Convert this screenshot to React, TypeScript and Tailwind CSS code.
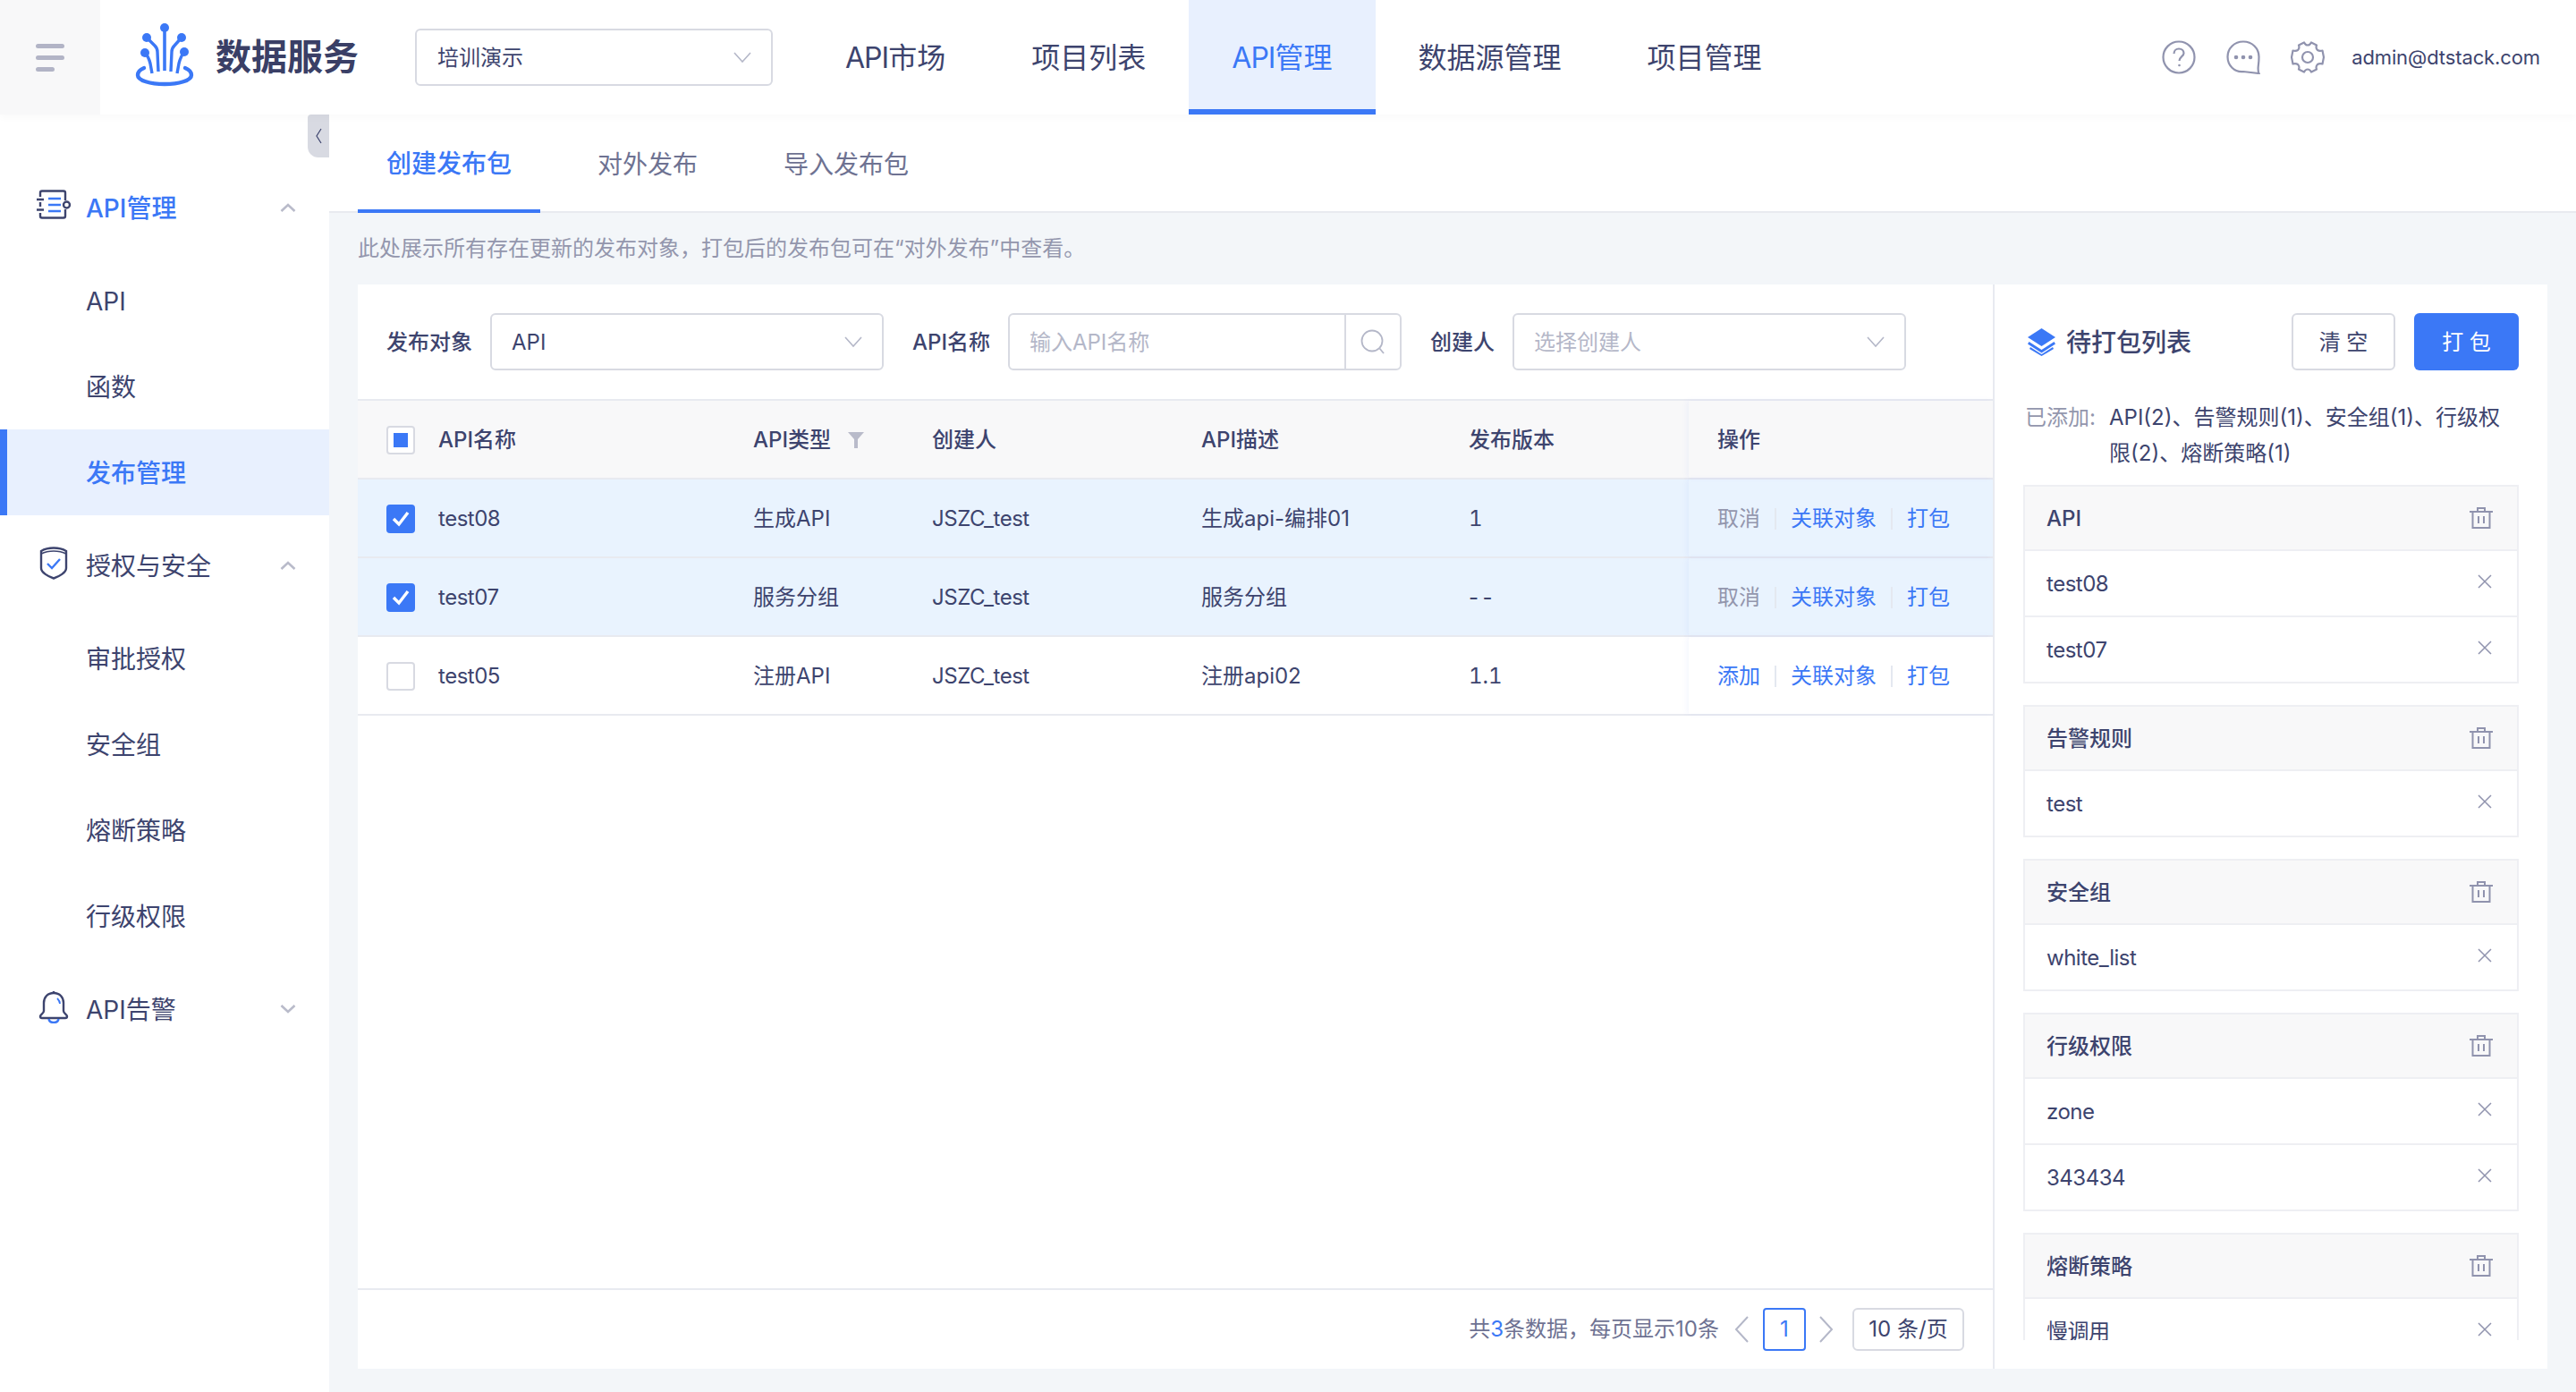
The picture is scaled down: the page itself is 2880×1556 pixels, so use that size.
import React from 'react';

const navItems = ['API市场', '项目列表', 'API管理', '数据源管理', '项目管理'];

const rows = [
  { name: 'test08', type: '生成API', creator: 'JSZC_test', desc: '生成api-编排01', version: '1', selected: true },
  { name: 'test07', type: '服务分组', creator: 'JSZC_test', desc: '服务分组', version: '- -', selected: true },
  { name: 'test05', type: '注册API', creator: 'JSZC_test', desc: '注册api02', version: '1.1', selected: false },
];

const packGroups = [
  { title: 'API', items: ['test08', 'test07'] },
  { title: '告警规则', items: ['test'] },
  { title: '安全组', items: ['white_list'] },
  { title: '行级权限', items: ['zone', '343434'] },
  { title: '熔断策略', items: ['慢调用'] },
];

const gridCols = 'grid grid-cols-[90px_353px_199px_301px_299px_246px_340px]';
const fixedCol = 'flex h-full items-center pl-[32px] shadow-[-2px_0_6px_rgba(63,110,246,0.06)]';

const Logo = () => (
  <svg width="90" height="90" viewBox="0 0 90 90" fill="none" stroke="#3b78f6">
    <circle cx="44" cy="14" r="5" fill="#3b78f6" stroke="none" />
    <circle cx="24" cy="25" r="5" fill="#3b78f6" stroke="none" />
    <circle cx="63" cy="25" r="5" fill="#3b78f6" stroke="none" />
    <circle cx="22" cy="42" r="5" fill="#3b78f6" stroke="none" />
    <circle cx="66" cy="41" r="5" fill="#3b78f6" stroke="none" />
    <path d="M44 14V62" strokeWidth="3.6" />
    <path d="M24 25L33 34C35 36 36 38 36 41L37 63" strokeWidth="3.4" />
    <path d="M63 25L55 34C53 36 52 38 52 41L51 63" strokeWidth="3.4" />
    <path d="M22 42C26 46 27 50 28 54L30 65" strokeWidth="3.4" />
    <path d="M66 41C62 46 61 50 60 54L58 65" strokeWidth="3.4" />
    <path d="M21 59C16 61 14 64 14 67C14 73 28 77 44 77C60 77 74 73 74 67C74 64 72 61 67 59" strokeWidth="4.4" strokeLinecap="round" />
  </svg>
);

const Chevron = ({ className = '' }: { className?: string }) => (
  <svg className={className} width="20" height="12" viewBox="0 0 20 12" fill="none" stroke="#b4b7c8" strokeWidth="1.6">
    <path d="M1 1L10 11L19 1" />
  </svg>
);

const MenuArrow = ({ up }: { up: boolean }) => (
  <svg width="18" height="10" viewBox="0 0 18 10" fill="none" stroke="#b9bbca" strokeWidth="2.6">
    <path d={up ? 'M1.5 9L9 2L16.5 9' : 'M1.5 1L9 8L16.5 1'} />
  </svg>
);

const ApiIcon = () => (
  <svg width="40" height="40" viewBox="10 10 40 40" fill="none" strokeWidth="2.4" className="shrink-0">
    <path d="M15 20V15.5A2 2 0 0 1 17 13.5H41A2 2 0 0 1 43 15.500V24M15 26V31M15 38V41.500A2 2 0 0 0 17 43.500H41A2 2 0 0 0 43 41.500V34" stroke="#3d446e" />
    <path d="M11 23H19M11 34.500H19" stroke="#3d446e" />
    <circle cx="44.500" cy="29" r="3.500" stroke="#3d446e" />
    <path d="M24 22H38M24 29H38M24 36H38" stroke="#3b78f6" />
  </svg>
);

const ShieldIcon = () => (
  <svg width="32" height="37" viewBox="0 0 32 37" fill="none" strokeWidth="2.4" className="shrink-0">
    <path d="M16 1.500C21 1.500 26 2.500 30 5V24C30 29 22 33.500 16 35.500C10 33.500 2 29 2 24V5C6 2.500 11 1.500 16 1.500Z" stroke="#3d446e" />
    <path d="M2 8C6 6 11 5 16 5C21 5 26 6 30 8" stroke="#3d446e" strokeWidth="1.600" />
    <path d="M9 19L14 24L23 14" stroke="#3b78f6" />
  </svg>
);

const BellIcon = () => (
  <svg width="34" height="37" viewBox="0 0 34 37" fill="none" strokeWidth="2.400" className="shrink-0">
    <path d="M17 3C10 3 6 8 6 14V23C6 26 2 27 2 29C2 30.500 3 31 4 31H30C31 31 32 30.500 32 29C32 27 28 26 28 23V14C28 8 24 3 17 3Z" stroke="#3d446e" />
    <path d="M17 1V3" stroke="#3d446e" />
    <path d="M21 9C23 11 24 13 24 15" stroke="#3b78f6" strokeWidth="1.800" />
    <path d="M11.500 32C12 35 14 36 17 36C20 36 22 35 22.500 32" stroke="#3b78f6" />
  </svg>
);

const HeaderIcons = () => (
  <div className="mr-[30px] flex items-center gap-[34px]">
    <svg width="38" height="38" viewBox="0 0 38 38" fill="none" stroke="#9093ae" strokeWidth="2.200">
      <circle cx="19" cy="19" r="17.500" />
      <path d="M13.500 15C13.500 11.500 16 9.500 19 9.500C22 9.500 24.500 11.500 24.500 14.500C24.500 18 19.500 18.500 19.500 23" />
      <circle cx="19.500" cy="28" r="1.300" fill="#9093ae" stroke="none" />
    </svg>
    <svg width="38" height="38" viewBox="0 0 38 38" fill="none" stroke="#9093ae" strokeWidth="2.200">
      <path d="M19 1.500C9 1.500 1.500 9 1.500 18.500C1.500 28 9 36 19 35L36.500 37C35 34 35.500 31 36 27C36.500 24 36.500 21 36.500 18.500C36.500 9 29 1.500 19 1.500Z" />
      <circle cx="11" cy="19" r="2.300" fill="#9093ae" stroke="none" />
      <circle cx="19" cy="19" r="2.300" fill="#9093ae" stroke="none" />
      <circle cx="27" cy="19" r="2.300" fill="#9093ae" stroke="none" />
    </svg>
    <svg width="38" height="38" viewBox="0 0 38 38" fill="none" stroke="#9093ae" strokeWidth="2.200">
      <circle cx="19" cy="19" r="6" />
      <path d="M15 2.500C16 4.500 17 5.500 19 5.500C21 5.500 22 4.500 23 2.500L29 5.500C28 8 28.500 9.500 30 11C31.500 12 33.500 12 35.500 11.500L37 19L35.500 26.500C33.500 26 31.500 26 30 27C28.500 28.500 28 30 29 32.500L23 35.500C22 33.500 21 32.500 19 32.500C17 32.500 16 33.500 15 35.500L9 32.500C10 30 9.500 28.500 8 27C6.500 26 4.500 26 2.500 26.500L1 19L2.500 11.500C4.500 12 6.500 12 8 11C9.500 9.500 10 8 9 5.500Z" strokeLinejoin="round" />
    </svg>
  </div>
);

const Header = () => (
  <header className="relative z-10 flex h-[128px] items-stretch bg-white shadow-[0_4px_8px_rgba(0,0,0,0.025)]">
    <div className="flex w-[112px] flex-col justify-center gap-[8px] bg-[#f8f8f9] pl-[40px]">
      <div className="h-[5px] w-[32px] rounded-full bg-[#b2b4c6]" />
      <div className="h-[5px] w-[32px] rounded-full bg-[#b2b4c6]" />
      <div className="h-[5px] w-[21px] rounded-full bg-[#b2b4c6]" />
    </div>
    <div className="ml-[28px] flex items-center pb-[4px]">
      <Logo />
    </div>
    <div className="ml-[11px] flex w-[223px] items-center text-[40px] font-semibold text-[#3a3f66]">数据服务</div>
    <div className="flex items-center">
      <div className="flex h-[64px] w-[400px] items-center justify-between rounded-[6px] border-2 border-[#d8dae2] pl-[23px] pr-[22px] text-2xl text-[#3d446e]">
        <span className="pt-[2px]">培训演示</span>
        <Chevron />
      </div>
    </div>
    <nav className="ml-[33px] flex items-stretch">
      {navItems.map((item) => (
        <div
          key={item}
          className={
            item === 'API管理'
              ? 'flex items-center border-b-[6px] border-[#3b78f6] bg-[#e8f0fe] px-[48px] pt-[8px] text-[32px] text-[#3b78f6]'
              : 'flex items-center px-[48px] pt-[2px] text-[32px] text-[#3d446e]'
          }
        >
          {item.startsWith('API') ? (
            <>
              <span className="tracking-[-0.03em]">API</span>
              {item.slice(3)}
            </>
          ) : (
            item
          )}
        </div>
      ))}
    </nav>
    <div className="ml-auto flex items-center">
      <HeaderIcons />
      <span className="mr-[40px] text-[22px] tracking-[-0.005em] text-[#3d446e]">admin@dtstack.com</span>
    </div>
  </header>
);

const MenuHeader = ({ icon, label, up, active }: { icon: React.ReactNode; label: string; up: boolean; active?: boolean }) => (
  <div className="flex h-[96px] items-center text-[28px]">
    <div className="ml-[40px] mr-[16px] flex w-[40px] justify-center pb-[5px]">{icon}</div>
    <span className={active ? 'pt-[2px] font-medium text-[#3b78f6]' : 'pt-[2px] text-[#3d446e]'}>{label}</span>
    <div className="ml-auto mr-[37px] flex">
      <MenuArrow up={up} />
    </div>
  </div>
);

const SubItem = ({ label, active }: { label: string; active?: boolean }) => (
  <div
    className={
      active
        ? 'flex h-[96px] items-center border-l-8 border-[#3b78f6] bg-[#e8f0fe] pl-[88px] pt-[2px] text-[28px] font-medium text-[#3b78f6]'
        : 'flex h-[96px] items-center pl-[96px] pt-[2px] text-[28px] text-[#3d446e]'
    }
  >
    {label}
  </div>
);

const Sidebar = () => (
  <aside className="relative w-[368px] shrink-0 bg-white pt-[56px]">
    {/* 折叠把手 */}
    <div className="absolute right-0 top-0 flex h-[48px] w-[24px] items-center justify-center rounded-bl-[12px] rounded-tl-[4px] bg-[#d8dae2]">
      <svg width="8" height="20" viewBox="0 0 8 20" fill="none" stroke="#3d446e" strokeWidth="1.200">
        <path d="M7 2L2 10L7 18" />
      </svg>
    </div>
    <MenuHeader icon={<ApiIcon />} label="API管理" up active />
    <div className="my-[8px]">
      <SubItem label="API" />
      <SubItem label="函数" />
      <SubItem label="发布管理" active />
    </div>
    <MenuHeader icon={<ShieldIcon />} label="授权与安全" up />
    <div className="my-[8px]">
      <SubItem label="审批授权" />
      <SubItem label="安全组" />
      <SubItem label="熔断策略" />
      <SubItem label="行级权限" />
    </div>
    <MenuHeader icon={<BellIcon />} label="API告警" up={false} />
  </aside>
);

const SelectBox = ({ value, placeholder }: { value?: string; placeholder?: string }) => (
  <div className="flex h-[64px] w-[440px] items-center justify-between rounded-[6px] border-2 border-[#d8dae2] pl-[22px] pr-[22px] text-2xl">
    <span className={value ? 'pt-[2px] text-[#3d446e]' : 'pt-[2px] text-[#b4b7c8]'}>{value || placeholder}</span>
    <Chevron />
  </div>
);

const Checkbox = ({ state }: { state: 'on' | 'off' | 'half' }) => {
  if (state === 'on') {
    return (
      <div className="flex h-[32px] w-[32px] items-center justify-center rounded-[4px] bg-[#3b78f6]">
        <svg width="20" height="18" viewBox="0 0 20 18" fill="none" stroke="#fff" strokeWidth="3.400">
          <path d="M2 9L8 15L18 2" />
        </svg>
      </div>
    );
  }
  return (
    <div className="flex h-[32px] w-[32px] items-center justify-center rounded-[4px] border-2 border-[#d8dae2] bg-white">
      {state === 'half' && <div className="h-[16px] w-[16px] bg-[#3b78f6]" />}
    </div>
  );
};

const Actions = ({ added }: { added: boolean }) => (
  <div className="flex items-center text-2xl text-[#3b78f6]">
    <span className={added ? 'text-[#9396ad]' : ''}>{added ? '取消' : '添加'}</span>
    <div className="mx-[16px] h-[24px] w-[2px] bg-[#e4e8f0]" />
    <span>关联对象</span>
    <div className="mx-[16px] h-[24px] w-[2px] bg-[#e4e8f0]" />
    <span>打包</span>
  </div>
);

const TablePanel = () => (
  <div className="flex w-[1828px] shrink-0 flex-col">
    <div className="flex h-[128px] items-center pl-[32px] text-2xl">
      <span className="mr-[20px] pt-[2px] font-medium text-[#3d446e]">发布对象</span>
      <SelectBox value="API" />
      <span className="ml-[32px] mr-[20px] pt-[2px] font-medium text-[#3d446e]">API名称</span>
      <div className="flex h-[64px] w-[440px] items-center rounded-[6px] border-2 border-[#d8dae2]">
        <span className="flex-1 pl-[22px] pt-[2px] text-[#b4b7c8]">输入API名称</span>
        <div className="flex h-full w-[62px] items-center justify-center border-l-2 border-[#d8dae2]">
          <svg width="28" height="28" viewBox="0 0 28 28" fill="none" stroke="#b4b7c8" strokeWidth="1.800">
            <circle cx="13" cy="13" r="11.500" />
            <path d="M21.500 21.500L26 27" />
          </svg>
        </div>
      </div>
      <span className="ml-[32px] mr-[20px] pt-[2px] font-medium text-[#3d446e]">创建人</span>
      <SelectBox placeholder="选择创建人" />
    </div>
    <div className="flex-1">
      <div className={`${gridCols} h-[90px] items-center border-y-2 border-[#e8eaf0] bg-[#f8f8f9] text-2xl font-medium text-[#3d446e]`}>
        <div className="pl-[32px] pt-[2px]">
          <Checkbox state="half" />
        </div>
        <div className="pt-[2px]">API名称</div>
        <div className="-ml-[1px] flex items-center pt-[2px]">
          API类型
          <svg className="ml-[19px]" width="18" height="18" viewBox="0 0 18 18" fill="#b9bbca">
            <path d="M0 0H18L11 8V18H7V8Z" />
          </svg>
        </div>
        <div className="pt-[2px]">创建人</div>
        <div className="pt-[2px]">API描述</div>
        <div className="pt-[2px]">发布版本</div>
        <div className={`${fixedCol} pt-[2px]`}>操作</div>
      </div>
      {rows.map((row) => (
        <div
          key={row.name}
          className={`${gridCols} h-[88px] items-center border-b-2 border-[#e8eaf0] text-2xl text-[#3d446e] ${row.selected ? 'bg-[#e9f3fe]' : 'bg-white'}`}
        >
          <div className="pl-[32px] pt-[2px]">
            <Checkbox state={row.selected ? 'on' : 'off'} />
          </div>
          <div className="pt-[2px] tracking-[-0.02em]">{row.name}</div>
          <div className="-ml-[1px] pt-[2px]">{row.type}</div>
          <div className="pt-[2px] tracking-[-0.02em]">{row.creator}</div>
          <div className="pt-[2px]">{row.desc}</div>
          <div className={row.version === '- -' ? 'pt-[2px] tracking-[-0.05em]' : 'pt-[2px] tabular-nums'}>{row.version}</div>
          <div className={`${fixedCol} pt-[2px]`}>
            <Actions added={row.selected} />
          </div>
        </div>
      ))}
    </div>
    <div className="flex h-[90px] items-center justify-end border-t-2 border-[#e8eaf0] pr-[32px] text-2xl">
      <span className="text-[#6e7292]">
        共<span className="text-[#3b78f6]">3</span>条数据，每页显示10条
      </span>
      <svg className="ml-[16px]" width="18" height="32" viewBox="0 0 18 32" fill="none" stroke="#b4b7c8" strokeWidth="2">
        <path d="M16 2L3 16L16 30" />
      </svg>
      <div className="ml-[15px] flex h-[48px] w-[48px] items-center justify-center rounded-[4px] border-2 border-[#3b78f6] text-[#3b78f6]">1</div>
      <svg className="ml-[14px]" width="18" height="32" viewBox="0 0 18 32" fill="none" stroke="#b4b7c8" strokeWidth="2">
        <path d="M2 2L15 16L2 30" />
      </svg>
      <div className="ml-[20px] flex h-[48px] w-[125px] items-center justify-center rounded-[6px] border-2 border-[#d8dae2] text-[#3d446e]">10 条/页</div>
    </div>
  </div>
);

const Trash = () => (
  <svg width="26" height="24" viewBox="0 0 26 24" fill="none" stroke="#9093ae" strokeWidth="2">
    <path d="M0 5H26M9 5V1H17V5M3.500 5V23H22.500V5M10 10V18M16 10V18" />
  </svg>
);

const Close = () => (
  <svg className="mb-[5px] mr-[4px]" width="16" height="16" viewBox="0 0 16 16" fill="none" stroke="#9093ae" strokeWidth="1.500">
    <path d="M1 1L15 15M15 1L1 15" />
  </svg>
);

const PackGroup = ({ title, items }: { title: string; items: string[] }) => (
  <div className="mb-[24px] border-2 border-[#eeeff3] text-2xl text-[#3d446e]">
    <div className="flex h-[72px] items-center justify-between border-b-2 border-[#eeeff3] bg-[#f8f8f9] pl-[24px] pr-[27px] font-medium">
      <span className="pt-[2px]">{title}</span>
      <Trash />
    </div>
    {items.map((item, i) => (
      <div key={item} className={i > 0 ? 'flex h-[74px] items-center justify-between border-t-2 border-[#eeeff3] pl-[24px] pr-[24px]' : 'flex h-[72px] items-center justify-between pl-[24px] pr-[24px]'}>
        <span className="pt-[2px] tracking-[-0.02em]">{item}</span>
        <Close />
      </div>
    ))}
  </div>
);

const PackPanel = () => (
  <div className="flex w-[620px] flex-col border-l-2 border-[#e8eaf0] px-[32px] pb-[32px] pt-[32px]">
    <div className="flex h-[64px] items-center">
      <svg className="ml-[5px]" width="31" height="31" viewBox="0 0 31 31" fill="#3b78f6">
        <path d="M15.500 0L31 10L15.500 20L0 10Z" />
        <path d="M1.500 15L15.500 24L29.500 15L31 17.500L15.500 27.500L0 17.500Z" />
        <path d="M3 21L15.500 29L28 21L29 23L15.500 31L2 23Z" />
      </svg>
      <span className="ml-[12px] pt-[2px] text-[28px] font-medium text-[#3d446e]">待打包列表</span>
      <div className="ml-auto flex h-[64px] w-[116px] items-center justify-center rounded-[6px] border-2 border-[#d8dae2] pt-[2px] text-2xl text-[#3d446e]">清 空</div>
      <div className="ml-[21px] flex h-[64px] w-[117px] items-center justify-center rounded-[6px] bg-[#3b78f6] pt-[2px] text-2xl text-white">打 包</div>
    </div>
    <div className="mb-[15px] mt-[33px] flex text-2xl leading-[40px]">
      <span className="w-[96px] shrink-0 whitespace-nowrap pl-[2px] text-[#9396ad]">已添加:</span>
      <span className="text-[#3d446e]">API(2)、告警规则(1)、安全组(1)、行级权限(2)、熔断策略(1)</span>
    </div>
    <div className="min-h-0 flex-1 overflow-hidden">
      {packGroups.map((group) => (
        <PackGroup key={group.title} title={group.title} items={group.items} />
      ))}
    </div>
  </div>
);

export default function App() {
  return (
    <div className="flex h-[1556px] w-[2880px] flex-col overflow-hidden bg-[#f3f6f9] [font-family:Inter,'Noto_Sans_CJK_SC',sans-serif]">
      <Header />
      <div className="flex min-h-0 flex-1">
        <Sidebar />
        <main className="flex min-w-0 flex-1 flex-col">
          <div className="flex h-[110px] gap-[32px] border-b-2 border-[#e8eaf0] bg-white pl-[32px] text-[28px]">
            <div className="-mb-[2px] flex w-[204px] items-center justify-center border-b-4 border-[#3b78f6] pt-[4px] font-medium text-[#3b78f6]">创建发布包</div>
            <div className="flex w-[176px] items-center justify-center pt-[4px] text-[#6e7292]">对外发布</div>
            <div className="flex w-[204px] items-center justify-center pt-[4px] text-[#6e7292]">导入发布包</div>
          </div>
          <div className="flex h-[80px] items-center pl-[32px] text-2xl text-[#9396ad]">此处展示所有存在更新的发布对象，打包后的发布包可在“对外发布”中查看。</div>
          <div className="mb-[26px] ml-[32px] mr-[32px] flex min-h-0 flex-1 bg-white">
            <TablePanel />
            <PackPanel />
          </div>
        </main>
      </div>
    </div>
  );
}
